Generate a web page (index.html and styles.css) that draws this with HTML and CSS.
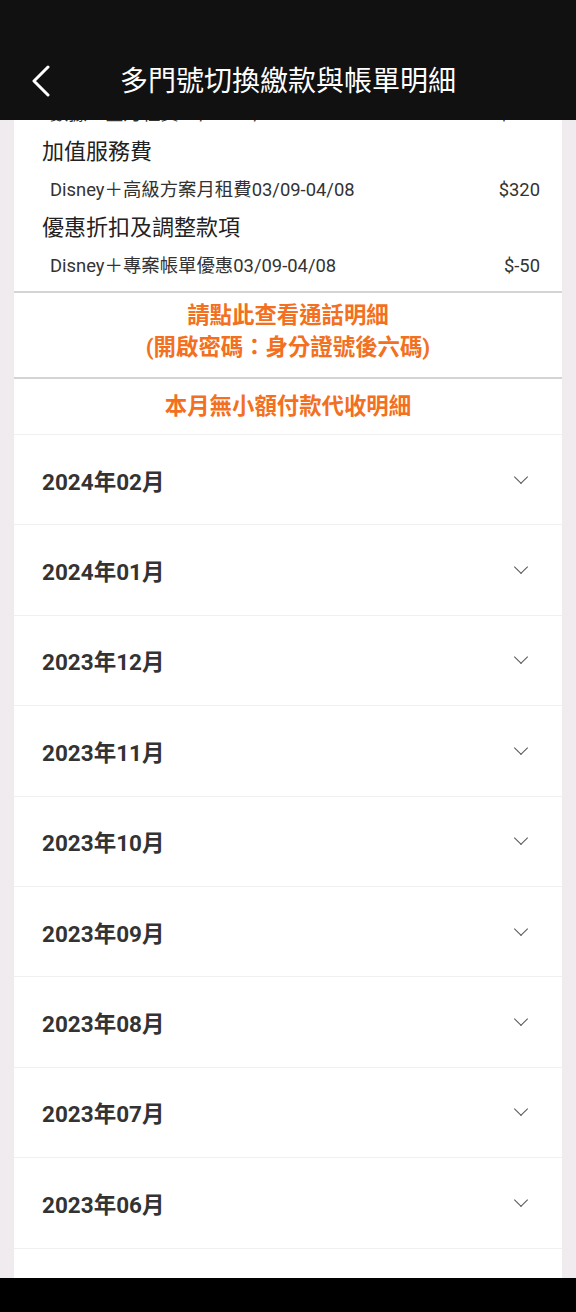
FILE: index.html
```html
<!DOCTYPE html>
<html lang="zh-Hant">
<head>
  <meta charset="UTF-8" />
  <meta name="viewport" content="width=device-width, initial-scale=1.0"/>
  <title>多門號切換繳款與帳單明細</title>
  <link rel="stylesheet" href="styles.css">
</head>
<body>
  <header class="topbar">
    <a class="back" href="#">
      <svg width="20" height="32" viewBox="0 0 20 32"><polyline points="17,2 3,16 17,30" fill="none" stroke="#fff" stroke-width="3" stroke-linecap="round" stroke-linejoin="round"/></svg>
    </a>
    <h1>多門號切換繳款與帳單明細</h1>
  </header>

  <main class="page">
    <div class="card">
      <div class="bill">
        <div class="item"><span>數據＋全月租費03/09-04/08</span><span>$199</span></div>
        <div class="group">加值服務費</div>
        <div class="item"><span>Disney＋高級方案月租費03/09-04/08</span><span>$320</span></div>
        <div class="group">優惠折扣及調整款項</div>
        <div class="item"><span>Disney＋專案帳單優惠03/09-04/08</span><span>$-50</span></div>
      </div>

      <a class="notice call-detail" href="#">請點此查看通話明細<br>(開啟密碼：身分證號後六碼)</a>
      <div class="notice micro">本月無小額付款代收明細</div>

      <ul class="months">
        <li>2024年02月<span class="chev"></span></li>
        <li>2024年01月<span class="chev"></span></li>
        <li>2023年12月<span class="chev"></span></li>
        <li>2023年11月<span class="chev"></span></li>
        <li>2023年10月<span class="chev"></span></li>
        <li>2023年09月<span class="chev"></span></li>
        <li>2023年08月<span class="chev"></span></li>
        <li>2023年07月<span class="chev"></span></li>
        <li>2023年06月<span class="chev"></span></li>
        <li>2023年05月<span class="chev"></span></li>
      </ul>
    </div>
  </main>

  <div class="navbar"></div>
</body>
</html>
```

FILE: styles.css
```css
body {
  font-family: Roboto, "Noto Sans CJK TC", sans-serif;
  background: #efebef;
  margin: 0;
  height: 1312px;
  overflow: hidden;
}

.topbar {
  position: fixed;
  top: 0;
  left: 0;
  right: 0;
  height: 120px;
  background: #111;
  z-index: 2;
}

.topbar h1 {
  margin: 0;
  padding-top: 62px;
  text-align: center;
  color: #fff;
  font-size: 28px;
  font-weight: 400;
  line-height: 40px;
}

.back {
  position: absolute;
  left: 31px;
  top: 65px;
  display: block;
}

.back svg {
  display: block;
}

.page {
  padding: 95px 14px 0;
}

.card {
  background: #fff;
}

.bill {
  padding: 0 22px 6px 28px;
  border-bottom: 2px solid #d4d4d4;
}

.group {
  font-size: 22px;
  line-height: 38px;
  color: #222;
}

.item {
  display: flex;
  justify-content: space-between;
  padding-left: 8px;
  font-size: 18.4px;
  line-height: 38px;
  color: #333;
}

.notice {
  display: block;
  text-align: center;
  color: #f37021;
  font-size: 22.4px;
  font-weight: 700;
  text-decoration: none;
}

.call-detail {
  line-height: 32px;
  padding: 6px 0 14px;
  border-bottom: 2px solid #d4d4d4;
}

.micro {
  line-height: 55px;
  border-bottom: 1px solid #f0f0f0;
}

.months {
  list-style: none;
  margin: 0;
  padding: 0;
}

.months li {
  display: flex;
  align-items: center;
  justify-content: space-between;
  height: 89.4px;
  padding: 0 36px 0 28px;
  border-bottom: 1px solid #f0f0f0;
  font-size: 22.5px;
  font-weight: 700;
  color: #333;
}

.chev {
  width: 9px;
  height: 9px;
  border-right: 1.6px solid #555;
  border-bottom: 1.6px solid #555;
  transform: rotate(45deg);
  margin-top: -6px;
}

.navbar {
  position: fixed;
  left: 0;
  right: 0;
  bottom: 0;
  height: 34px;
  background: #000;
  z-index: 2;
}
```
